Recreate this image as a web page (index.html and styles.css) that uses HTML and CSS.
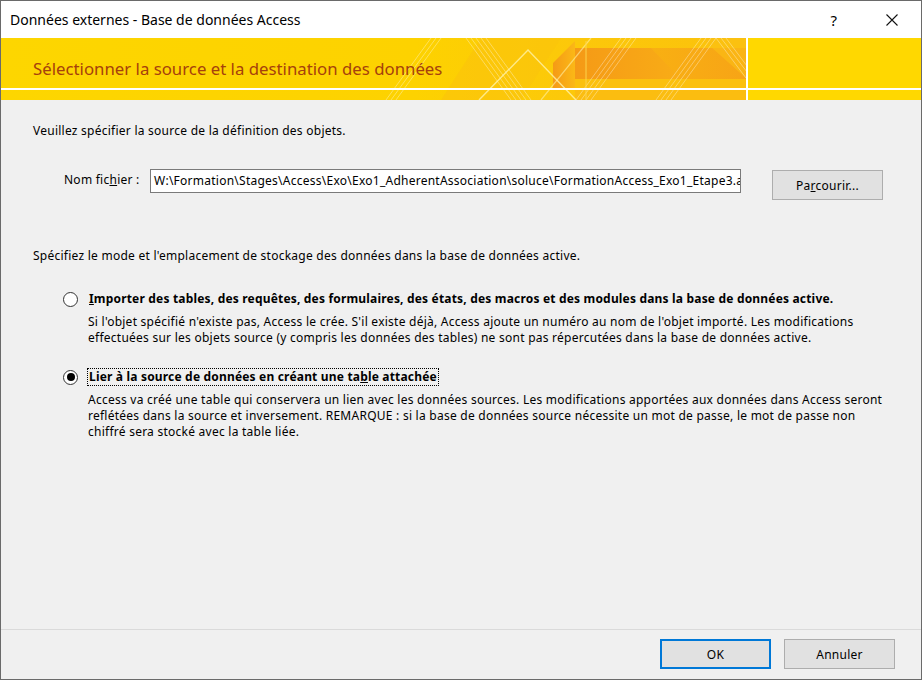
FILE: index.html
```html
<!DOCTYPE html>
<html lang="fr">
<head>
    <meta charset="UTF-8">
    <title>Données externes - Base de données Access</title>
    <link rel="stylesheet" href="styles.css">
</head>
<body>
<div class="window">
    <div class="titlebar">
        <div class="title">Données externes - Base de données Access</div>
        <div class="title-btn help">?</div>
        <div class="title-btn close">
            <svg width="12" height="12" viewBox="0 0 12 12">
                <path d="M0.5 0.5 L11.5 11.5 M11.5 0.5 L0.5 11.5" stroke="#111" stroke-width="1.1" fill="none"/>
            </svg>
        </div>
    </div>

    <div class="banner">
        <svg class="banner-art" width="920" height="62" viewBox="0 0 920 62">
            <defs>
                <linearGradient id="base" x1="0" y1="0" x2="1" y2="0">
                    <stop offset="0" stop-color="#fdd600"/>
                    <stop offset="0.45" stop-color="#fdd200"/>
                    <stop offset="0.62" stop-color="#fcc80a"/>
                    <stop offset="0.81" stop-color="#fbc20c"/>
                </linearGradient>
                <linearGradient id="arrow" x1="0" y1="0" x2="1" y2="0">
                    <stop offset="0" stop-color="#f59a16"/>
                    <stop offset="1" stop-color="#fbb816"/>
                </linearGradient>
                <linearGradient id="trap" x1="0" y1="0" x2="1" y2="0">
                    <stop offset="0" stop-color="#f9b012"/>
                    <stop offset="1" stop-color="#f7a416"/>
                </linearGradient>
            </defs>
            <rect x="0" y="0" width="920" height="62" fill="url(#base)"/>
            <rect x="746" y="0" width="174" height="62" fill="#ffd800"/>
            <!-- decoration -->
            <polygon points="480,0 560,0 520,62 440,62" fill="#fbc50c" opacity="0.7"/>
            <polygon points="552,25 574,3 574,50 552,50" fill="url(#arrow)"/>
            <rect x="574" y="10" width="172" height="31" fill="url(#arrow)"/>
            <rect x="574" y="41" width="172" height="9" fill="#fbc00e"/>
            <rect x="574" y="52" width="172" height="10" fill="#fbbd10"/>
            <polygon points="650,10 746,10 746,41 680,41" fill="url(#trap)"/>
            <polygon points="700,0 746,0 746,41" fill="#fbc014" opacity="0.6"/>
            <g stroke="#ffffff" stroke-opacity="0.35" stroke-width="1">
                <path d="M465 0 L510 62 M470 0 L515 62 M475 0 L520 62 M480 0 L525 62 M485 0 L530 62"/>
                <path d="M575 62 L620 0 M580 62 L625 0 M585 62 L630 0 M590 62 L635 0"/>
                <path d="M655 62 L700 0 M660 62 L705 0 M665 62 L710 0 M670 62 L715 0"/>
                <path d="M715 0 L745 40 M720 0 L746 34 M725 0 L746 28"/>
                <path d="M385 62 L430 0 M390 62 L435 0 M395 62 L440 0"/>
            </g>
            <path d="M478 62 L527 12 L575 62" stroke="#fff2a8" stroke-width="1.4" fill="none" stroke-opacity="0.8"/>
            <path d="M540 62 L590 0" stroke="#fff2a8" stroke-width="1.2" fill="none" stroke-opacity="0.6"/>
            <path d="M585 3 L585 62" stroke="#fcd34a" stroke-width="1" fill="none"/>
            <rect x="0" y="50" width="920" height="2" fill="#ffffff"/>
            <rect x="745" y="0" width="2" height="62" fill="#ffffff"/>
        </svg>
        <div class="banner-title">Sélectionner la source et la destination des données</div>
    </div>

    <div class="content">
        <p class="intro">Veuillez spécifier la source de la définition des objets.</p>

        <div class="file-row">
            <label class="file-label">Nom fic<u>h</u>ier :</label>
            <div class="file-input">W:\Formation\Stages\Access\Exo\Exo1_AdherentAssociation\soluce\FormationAccess_Exo1_Etape3.accdb</div>
            <button class="btn browse">Pa<u>r</u>courir...</button>
        </div>

        <p class="mode-text">Spécifiez le mode et l'emplacement de stockage des données dans la base de données active.</p>

        <div class="option">
            <div class="option-head">
                <span class="radio"></span>
                <span class="option-label"><u>I</u>mporter des tables, des requêtes, des formulaires, des états, des macros et des modules dans la base de données active.</span>
            </div>
            <p class="option-desc">Si l'objet spécifié n'existe pas, Access le crée. S'il existe déjà, Access ajoute un numéro au nom de l'objet importé. Les modifications effectuées sur les objets source (y compris les données des tables) ne sont pas répercutées dans la base de données active.</p>
        </div>

        <div class="option second">
            <div class="option-head">
                <span class="radio checked"></span>
                <span class="option-label focus">Lier à la source de données en créant une ta<u>b</u>le attachée</span>
            </div>
            <p class="option-desc">Access va créé une table qui conservera un lien avec les données sources. Les modifications apportées aux données dans Access seront reflétées dans la source et inversement. REMARQUE : si la base de données source nécessite un mot de passe, le mot de passe non chiffré sera stocké avec la table liée.</p>
        </div>
    </div>

    <div class="footer">
        <button class="btn ok">OK</button>
        <button class="btn">Annuler</button>
    </div>
</div>
</body>
</html>
```

FILE: styles.css
```css
body {
    margin: 0;
    font-family: "Noto Sans", "Open Sans", sans-serif;
    font-size: 12px;
    letter-spacing: 0.25px;
    color: #000;
    background: #f0f0f0;
}

.window {
    width: 922px;
    height: 680px;
    box-sizing: border-box;
    border: 1px solid #6a6a6a;
    background: #f0f0f0;
    display: flex;
    flex-direction: column;
}

.titlebar {
    height: 37px;
    background: #fff;
    display: flex;
    align-items: center;
}

.title {
    flex: 1;
    padding-left: 9px;
    font-size: 14px;
    letter-spacing: 0;
    color: #000;
}

.title-btn {
    width: 56px;
    height: 37px;
    display: flex;
    justify-content: center;
    align-items: center;
}

.help {
    font-size: 15px;
    margin-right: 2px;
}

.close {
    margin-right: 1px;
}

.banner {
    position: relative;
    height: 62px;
}

.banner-art {
    position: absolute;
    left: 0;
    top: 0;
    display: block;
}

.banner-title {
    position: relative;
    padding: 19px 0 0 32px;
    font-size: 16.8px;
    letter-spacing: 0;
    color: #a6400c;
}

.content {
    flex: 1;
    padding: 23px 0 0 32px;
    border-bottom: 1px solid #dadada;
}

p {
    margin: 0;
    line-height: 16px;
}

.file-row {
    display: flex;
    align-items: flex-start;
    margin: 30px 0 0 31px;
}

.file-label {
    width: 86px;
    margin-top: 3px;
    line-height: 16px;
}

.file-input {
    width: 586px;
    height: 22px;
    border: 1px solid #7a7a7a;
    background: #fff;
    line-height: 22px;
    padding-left: 3px;
    white-space: nowrap;
    overflow: hidden;
    margin-right: 31px;
}

.btn {
    font-family: inherit;
    font-size: 12px;
    letter-spacing: 0.25px;
    color: #000;
    background: #e1e1e1;
    border: 1px solid #adadad;
    width: 111px;
    height: 30px;
    padding: 0;
    box-sizing: border-box;
}

.browse {
    margin-top: 1px;
}

.mode-text {
    margin-top: 48px;
}

.option {
    margin: 26px 0 0 30px;
}

.option.second {
    margin-top: 22px;
}

.option-head {
    display: flex;
    align-items: center;
    height: 18px;
}

.radio {
    width: 13px;
    height: 13px;
    border: 1px solid #333;
    border-radius: 50%;
    background: #fff;
    margin-right: 9px;
    display: flex;
    justify-content: center;
    align-items: center;
    flex: none;
}

.radio.checked::after {
    content: "";
    width: 8px;
    height: 8px;
    border-radius: 50%;
    background: #000;
}

.option-label {
    font-weight: bold;
    letter-spacing: 0.18px;
    line-height: 16px;
    padding: 0 1px;
    border: 1px solid transparent;
}

.option-label.focus {
    border: 1px dotted #000;
}

.option-desc {
    margin: 6px 0 0 25px;
    width: 800px;
}

.footer {
    height: 49px;
    display: flex;
    justify-content: flex-end;
    align-items: flex-start;
    padding: 9px 26px 0 0;
    box-sizing: border-box;
    gap: 13px;
}

.btn.ok {
    border: 2px solid #0078d7;
}
```
